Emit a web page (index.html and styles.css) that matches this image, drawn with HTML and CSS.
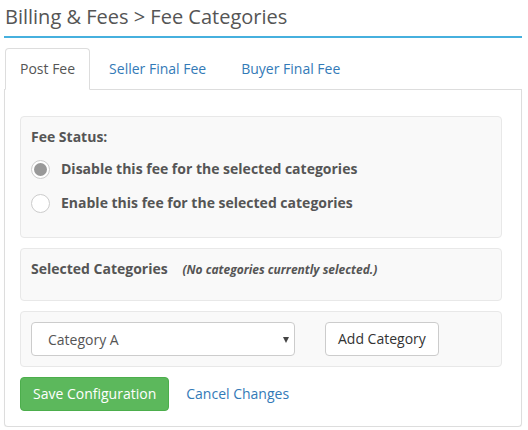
FILE: index.html
```html
<!DOCTYPE html>
<html>
<head>
  <meta charset="UTF-8">
  <meta name="viewport" content="width=device-width, initial-scale=1">
  <title>Fee Categories</title>
  <link rel="stylesheet" href="styles.css">
</head>
<body>
  <h1 class="page-title">Billing &amp; Fees &gt; Fee Categories</h1>

  <ul class="tabs">
    <li class="tab active">Post Fee</li>
    <li class="tab">Seller Final Fee</li>
    <li class="tab">Buyer Final Fee</li>
  </ul>

  <div class="tab-panel">
    <div class="well">
      <div class="well-label">Fee Status:</div>
      <label class="radio-row">
        <span class="radio checked"></span>
        Disable this fee for the selected categories
      </label>
      <label class="radio-row">
        <span class="radio"></span>
        Enable this fee for the selected categories
      </label>
    </div>

    <div class="well well-short">
      <span class="well-label">Selected Categories</span>
      <span class="note">(No categories currently selected.)</span>
    </div>

    <div class="well well-form">
      <div class="select-wrap">
        <select class="select">
          <option>Category A</option>
        </select>
        <span class="select-arrow"></span>
      </div>
      <button class="btn">Add Category</button>
    </div>

    <div class="actions">
      <button class="btn btn-save">Save Configuration</button>
      <a class="link" href="#">Cancel Changes</a>
    </div>
  </div>
</body>
</html>
```

FILE: styles.css
```css
body {
  font-family: 'Open Sans', 'Noto Sans', sans-serif;
  font-size: 14px;
  line-height: 20px;
  color: #555;
  margin: 0;
  padding: 0 6px 0 4px;
  background: #fff;
}

.page-title {
  font-size: 20px;
  font-weight: normal;
  line-height: 28px;
  margin: 0;
  padding: 3px 0 5px 1px;
  border-bottom: 2px solid #46b0de;
}

.tabs {
  list-style: none;
  margin: 10px 0 0;
  padding: 0 0 0 1px;
  display: flex;
  border-bottom: 1px solid #ddd;
}

.tab {
  padding: 10px 15px;
  margin-bottom: -1px;
  margin-right: 3px;
  color: #337ab7;
  border: 1px solid transparent;
  border-radius: 4px 4px 0 0;
}

.tab.active {
  padding: 10px 14px;
  color: #555;
  background: #fff;
  border-color: #ddd #ddd #fff;
}

.tab-panel {
  border: 1px solid #ddd;
  border-top: none;
  border-radius: 0 0 4px 4px;
  padding: 26px 19px 15px 15px;
  box-shadow: 0 1px 1px rgba(0, 0, 0, 0.05);
}

.well {
  background: #f9f9f9;
  border: 1px solid #e8e8e8;
  border-radius: 4px;
  padding: 10px 10px 22px;
  margin-bottom: 10px;
}

.well-label {
  font-weight: bold;
}

.radio-row {
  display: flex;
  align-items: center;
  gap: 11px;
  font-weight: bold;
  margin-top: 10px;
  height: 24px;
}

.radio {
  width: 17px;
  height: 17px;
  border: 1px solid #ccc;
  border-radius: 50%;
  background: #fff;
  display: flex;
  align-items: center;
  justify-content: center;
}

.radio.checked::after {
  content: "";
  width: 13px;
  height: 13px;
  border-radius: 50%;
  background: #999;
}

.well-short {
  padding: 10px 10px 20px;
}

.note {
  font-size: 12px;
  font-weight: bold;
  font-style: italic;
  margin-left: 11px;
}

.well-form {
  display: flex;
  align-items: center;
  gap: 30px;
  padding: 10px;
}

.select-wrap {
  position: relative;
  width: 264px;
}

.select {
  appearance: none;
  display: block;
  width: 100%;
  height: 34px;
  padding: 0 16px;
  font-family: inherit;
  font-size: 14px;
  color: #555;
  background: #fff;
  border: 1px solid #ccc;
  border-radius: 4px;
}

.select-arrow {
  position: absolute;
  right: 6px;
  top: 15px;
  border-left: 3px solid transparent;
  border-right: 3px solid transparent;
  border-top: 6px solid #444;
  pointer-events: none;
}

.btn {
  font-family: inherit;
  font-size: 14px;
  line-height: 20px;
  color: #333;
  background: #fff;
  border: 1px solid #ccc;
  border-radius: 4px;
  padding: 6px 12px;
  height: 34px;
}

.actions {
  display: flex;
  align-items: center;
  gap: 17px;
}

.btn-save {
  color: #fff;
  background: #5cb85c;
  border-color: #4cae4c;
}

.link {
  color: #337ab7;
  text-decoration: none;
}
```
